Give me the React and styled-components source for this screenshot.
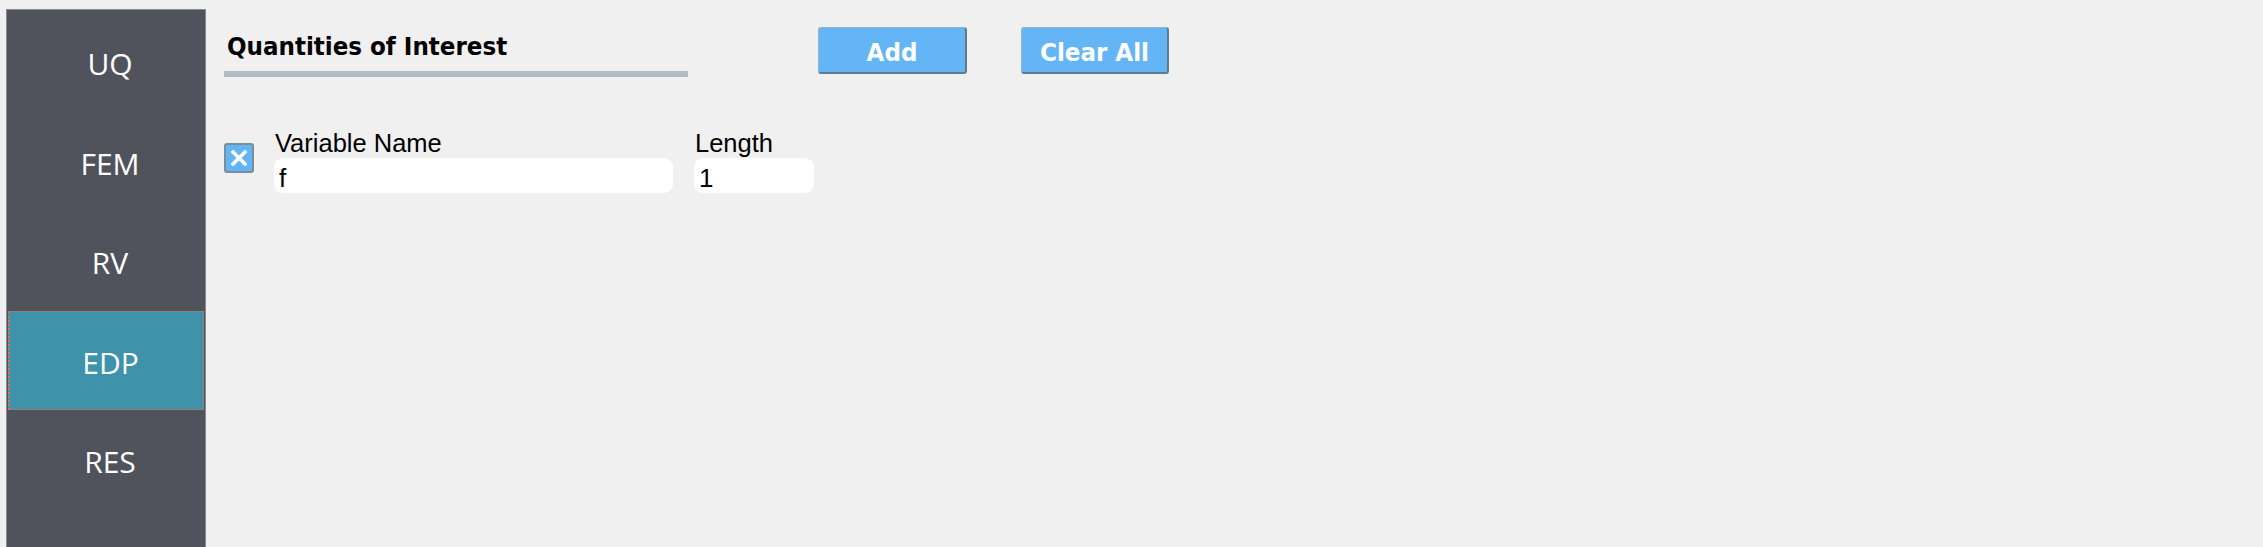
import React, { useState } from "react";
import styled, { createGlobalStyle } from "styled-components";

const GlobalStyle = createGlobalStyle`
  html, body {
    margin: 0;
    padding: 0;
    background: #f0f0f0;
  }
  body {
    font-family: "Liberation Sans", Arial, sans-serif;
  }
`;

const StyledPage = styled.div`
  display: flex;
  align-items: stretch;
  height: 547px;
  padding: 9px 0 0 6px;
  box-sizing: border-box;
  background: #f0f0f0;
  overflow: hidden;
`;

const StyledSidebar = styled.nav`
  width: 200px;
  flex-shrink: 0;
  background-color: #50535b;
  border: 1px solid #868a91;
  border-bottom: none;
  box-sizing: border-box;
  padding: 2px 1px 0 1px;
  display: flex;
  flex-direction: column;
`;

const StyledNavItem = styled.div`
  height: 99.5px;
  display: flex;
  align-items: center;
  justify-content: center;
  font-family: "Open Sans", sans-serif;
  font-size: 30px;
  color: #ffffff;
  box-sizing: border-box;
  cursor: pointer;
  background-color: ${(props) => (props.$active ? "#3e92a9" : "transparent")};
  border: 1px dotted ${(props) => (props.$active ? "#e0714f" : "transparent")};
  border-left-width: ${(props) => (props.$active ? "2px" : "1px")};
  padding: 4px 0 0 8px;
`;

const StyledMain = styled.main`
  flex: 1;
  padding: 18px 0 0 18px;
  display: flex;
  flex-direction: column;
`;

const StyledHeader = styled.div`
  display: flex;
  align-items: flex-start;
`;

const StyledTitleBlock = styled.div`
  width: 464px;
  margin-top: 4px;
  display: flex;
  flex-direction: column;
  gap: 10px;
`;

const StyledTitle = styled.h2`
  margin: 0 0 0 3px;
  font-family: "DejaVu Sans Condensed", "DejaVu Sans", sans-serif;
  font-stretch: condensed;
  font-weight: bold;
  font-size: 25.6px;
  line-height: 30px;
  color: #000000;
`;

const StyledTitleBar = styled.div`
  height: 6px;
  background-color: #afbcc4;
`;

const StyledButtonGroup = styled.div`
  display: flex;
  gap: 54px;
  margin-left: 130px;
`;

const StyledButton = styled.button`
  width: ${(props) => props.$width}px;
  height: 47px;
  background-color: #64b5f6;
  color: #ffffff;
  font-family: "DejaVu Sans Condensed", "DejaVu Sans", sans-serif;
  font-stretch: condensed;
  font-weight: bold;
  font-size: 25.6px;
  border: 1px solid;
  border-color: #8db6cf #5d7c90 #5d7c90 #8db6cf;
  border-right-width: 2px;
  border-bottom-width: 2px;
  border-radius: 3px;
  padding: 4px 0 0 0;
  cursor: pointer;
`;

const StyledRow = styled.div`
  display: flex;
  align-items: flex-start;
  margin-top: 52px;
  gap: 20px;
`;

const StyledRemove = styled.button`
  width: 30px;
  height: 30px;
  margin-top: 14px;
  padding: 0;
  background-color: #64b5f6;
  border: 2px solid #7b8d9b;
  border-radius: 3px;
  display: flex;
  align-items: center;
  justify-content: center;
  cursor: pointer;
`;

const StyledFields = styled.div`
  display: flex;
  gap: 21px;
`;

const StyledField = styled.div`
  display: flex;
  flex-direction: column;
  width: ${(props) => props.$width}px;
`;

const StyledLabel = styled.label`
  font-family: "Liberation Sans", Arial, sans-serif;
  font-size: 25.5px;
  line-height: 29px;
  color: #000000;
  padding-left: 1px;
`;

const StyledInput = styled.input`
  height: 35px;
  box-sizing: border-box;
  border: none;
  border-radius: 9px;
  background: #ffffff;
  font-family: "Liberation Sans", Arial, sans-serif;
  font-size: 26px;
  color: #000000;
  padding: 6px 6px 0 5px;
  outline: none;
`;

const navItems = ["UQ", "FEM", "RV", "EDP", "RES"];

const App = () => {
  const [active, setActive] = useState("EDP");
  const [name, setName] = useState("f");
  const [length, setLength] = useState("1");

  return (
    <>
      <GlobalStyle />
      <StyledPage>
        <StyledSidebar>
          {navItems.map((item) => (
            <StyledNavItem key={item} $active={item === active} onClick={() => setActive(item)}>
              {item}
            </StyledNavItem>
          ))}
        </StyledSidebar>
        <StyledMain>
          <StyledHeader>
            <StyledTitleBlock>
              <StyledTitle>Quantities of Interest</StyledTitle>
              <StyledTitleBar />
            </StyledTitleBlock>
            <StyledButtonGroup>
              <StyledButton $width={149}>Add</StyledButton>
              <StyledButton $width={148}>Clear All</StyledButton>
            </StyledButtonGroup>
          </StyledHeader>

          <StyledRow>
            <StyledRemove aria-label="remove">
              <svg width="16" height="16" viewBox="0 0 16 16">
                <path d="M2 2 L14 14 M14 2 L2 14" stroke="#ffffff" strokeWidth="3.6" strokeLinecap="square" />
              </svg>
            </StyledRemove>
            <StyledFields>
              <StyledField $width={399}>
                <StyledLabel>Variable Name</StyledLabel>
                <StyledInput value={name} onChange={(ev) => setName(ev.target.value)} />
              </StyledField>
              <StyledField $width={120}>
                <StyledLabel>Length</StyledLabel>
                <StyledInput value={length} onChange={(ev) => setLength(ev.target.value)} />
              </StyledField>
            </StyledFields>
          </StyledRow>
        </StyledMain>
      </StyledPage>
    </>
  );
};

export default App;
